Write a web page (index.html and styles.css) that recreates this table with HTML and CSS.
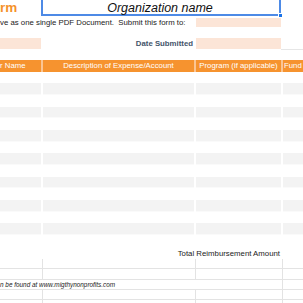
FILE: index.html
```html
<!DOCTYPE html>
<html lang="en">
<head>
    <meta charset="UTF-8">
    <title>Reimbursement Form</title>
    <link rel="stylesheet" href="styles.css">
</head>
<body>
    <div class="sheet">
        <!-- title row -->
        <div class="row top-row">
            <div class="title">rm</div>
            <div class="org-cell">
                Organization name
                <span class="handle"></span>
            </div>
        </div>

        <!-- submit to -->
        <div class="row submit-row">
            <div class="note">ve as one single PDF Document.&nbsp; Submit this form to:</div>
            <div class="field"></div>
        </div>

        <!-- date -->
        <div class="row date-row">
            <div class="field"></div>
            <div class="label">Date Submitted</div>
            <div class="field"></div>
            <div class="rule"></div>
        </div>

        <!-- expenses -->
        <div class="expenses">
            <div class="row head">
                <div class="cell">r Name</div>
                <div class="cell">Description of Expense/Account</div>
                <div class="cell">Program (if applicable)</div>
                <div class="cell left">Fund</div>
            </div>
            <div class="row line"><div></div><div></div><div></div><div></div></div>
            <div class="row line alt"><div></div><div></div><div></div><div></div></div>
            <div class="row line"><div></div><div></div><div></div><div></div></div>
            <div class="row line alt"><div></div><div></div><div></div><div></div></div>
            <div class="row line"><div></div><div></div><div></div><div></div></div>
            <div class="row line alt"><div></div><div></div><div></div><div></div></div>
            <div class="row line"><div></div><div></div><div></div><div></div></div>
            <div class="row line alt"><div></div><div></div><div></div><div></div></div>
            <div class="row line"><div></div><div></div><div></div><div></div></div>
            <div class="row line alt"><div></div><div></div><div></div><div></div></div>
            <div class="row line"><div></div><div></div><div></div><div></div></div>
            <div class="row line alt"><div></div><div></div><div></div><div></div></div>
            <div class="row line"><div></div><div></div><div></div><div></div></div>
            <div class="row line alt"><div></div><div></div><div></div><div></div></div>
        </div>

        <div class="total">Total Reimbursement Amount</div>

        <!-- plain grid below -->
        <div class="grid">
            <div class="grow"><div></div><div></div><div></div><div></div></div>
            <div class="grow"><div></div><div></div><div></div><div></div></div>
            <div class="grow"><div class="footnote">n be found at www.migthynonprofits.com</div><div></div><div></div></div>
            <div class="grow"><div></div><div></div><div></div><div></div></div>
            <div class="grow"><div></div><div></div><div></div><div></div></div>
        </div>
    </div>
</body>
</html>
```

FILE: styles.css
```css
* {
    margin: 0;
    padding: 0;
    box-sizing: border-box;
}

html, body {
    overflow: hidden;
}

body {
    font-family: "Liberation Sans", Arial, sans-serif;
    font-size: 7.8px;
    color: #222;
    background: #fff;
}

.sheet {
    margin-top: -6px;
    width: 303px;
}

.row {
    display: grid;
    grid-template-columns: 41px 151px 85px 1fr;
    column-gap: 2px;
}

/* title + organization */
.top-row {
    height: 22px;
}

.title {
    display: flex;
    align-items: flex-end;
    padding-bottom: 2px;
    font-size: 13.5px;
    font-weight: bold;
    line-height: 1;
    color: #f5922b;
}

.org-cell {
    grid-column: 2 / 4;
    margin-left: -2px;
    position: relative;
    display: flex;
    align-items: flex-end;
    justify-content: center;
    padding-right: 2px;
    border: 2px solid #4d8ae6;
    font-size: 12.5px;
    font-style: italic;
    line-height: 1;
    color: #111;
}

.handle {
    position: absolute;
    right: -4px;
    bottom: -4px;
    width: 5px;
    height: 5px;
    background: #1a73e8;
    border: 1px solid #fff;
}

/* submit to */
.submit-row {
    height: 9px;
    margin-top: 2px;
    line-height: 9px;
}

.note {
    grid-column: 1 / 3;
    white-space: nowrap;
}

.field {
    background: #fce5d7;
}

.submit-row .field {
    grid-column: 3;
}

/* date */
.date-row {
    height: 12px;
    margin-top: 11px;
    line-height: 11px;
}

.date-row .field {
    height: 11px;
}

.label {
    text-align: right;
    padding-right: 1px;
    font-weight: bold;
    color: #44546a;
}

.rule {
    margin-left: -2px;
    border-bottom: 1px solid #e6e6e6;
}

/* expense table */
.expenses {
    margin-top: 10px;
}

.expenses .row {
    height: calc(35px / 3);
}

.head {
    background: #fbc593;
    line-height: calc(35px / 3);
}

.head .cell {
    background: #f6932f;
    color: #fff;
    text-align: center;
    white-space: nowrap;
    overflow: hidden;
}

.head .cell:first-child {
    text-align: left;
}

.head .left {
    text-align: left;
    padding-left: 1px;
}

.line.alt div {
    background: #f3f3f3;
    border-bottom: 1px solid #fafafa;
}

.total {
    height: 24px;
    padding-top: 14px;
    padding-right: 23px;
    line-height: 10px;
    text-align: right;
}

/* bottom gridlines */
.grow {
    display: grid;
    grid-template-columns: 43px 153px 87px 1fr;
    height: calc(31px / 3);
    border-bottom: 1px solid #e3e3e3;
    line-height: calc(28px / 3);
}

.grow div {
    border-right: 1px solid #e3e3e3;
}

.grow div:last-child {
    border-right: none;
}

.footnote {
    grid-column: 1 / 3;
    font-size: 6.4px;
    font-style: italic;
    white-space: nowrap;
    border-right: none !important;
}
```
